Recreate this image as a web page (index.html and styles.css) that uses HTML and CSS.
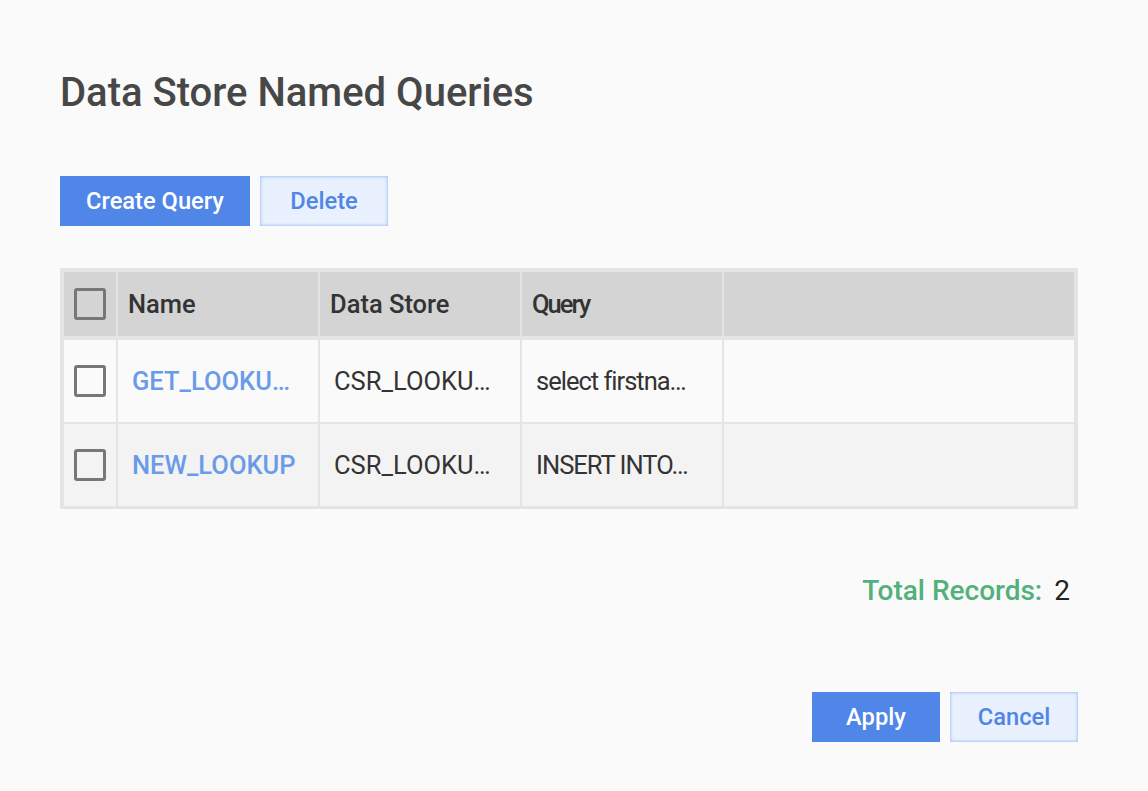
FILE: index.html
```html
<!DOCTYPE html>
<html>
  <head>
    <meta charset="utf-8">
    <title>Data Store Named Queries</title>
    <link rel="stylesheet" href="styles.css">
  </head>
  <body>
    <div class="dialog">
      <h1 class="title">Data Store Named Queries</h1>

      <div class="toolbar">
        <button class="btn primary wide" type="button">Create Query</button>
        <button class="btn secondary" type="button">Delete</button>
      </div>

      <div class="grid">
        <div class="cell head check"><span class="box"></span></div>
        <div class="cell head">Name</div>
        <div class="cell head">Data Store</div>
        <div class="cell head query">Query</div>
        <div class="cell head"></div>

        <div class="cell odd check"><span class="box"></span></div>
        <div class="cell odd body"><a class="link" href="#">GET_LOOKU…</a></div>
        <div class="cell odd body">CSR_LOOKU…</div>
        <div class="cell odd body query">select firstna…</div>
        <div class="cell odd body"></div>

        <div class="cell even check"><span class="box"></span></div>
        <div class="cell even body"><a class="link" href="#">NEW_LOOKUP</a></div>
        <div class="cell even body">CSR_LOOKU…</div>
        <div class="cell even body query">INSERT INTO…</div>
        <div class="cell even body"></div>
      </div>

      <div class="total">
        <span class="total-label">Total Records:</span>
        <span class="total-count">2</span>
      </div>

      <div class="footer">
        <button class="btn primary" type="button">Apply</button>
        <button class="btn secondary" type="button">Cancel</button>
      </div>
    </div>
  </body>
</html>
```

FILE: styles.css
```css
html {
  font-family: Roboto, "Liberation Sans", sans-serif;
}
body {
  margin: 0;
  background-color: #fafafa;
}
.dialog {
  padding: 70px 70px 0 60px;
}
.title {
  margin: 0;
  font-size: 40px;
  font-weight: 500;
  color: #474747;
  line-height: 46px;
}
.toolbar {
  display: flex;
  gap: 10px;
  margin-top: 60px;
}
.btn {
  font-family: Roboto, "Liberation Sans", sans-serif;
  font-size: 23.7px;
  font-weight: 500;
  width: 128px;
  height: 50px;
  border: 0;
  padding: 0;
  cursor: pointer;
}
.btn.wide {
  width: 190px;
}
.primary {
  background-color: #4f86e8;
  color: #ffffff;
}
.secondary {
  background-color: #e9f1fe;
  color: #4f86e8;
  box-shadow: inset 0 0 3px 1px #a9c5f5;
}
.grid {
  display: grid;
  grid-template-columns: 52px 200px 200px 200px 1fr;
  grid-template-rows: 66px 82px 82px;
  gap: 2px;
  margin-top: 42px;
  padding: 4px 4px 3px;
  background-color: #e4e4e4;
}
.cell {
  display: flex;
  align-items: center;
  font-size: 25.5px;
  color: #333333;
  white-space: nowrap;
  overflow: hidden;
}
.head {
  background-color: #d4d4d4;
  font-weight: 500;
  padding-left: 10px;
  margin-bottom: 2px;
}
.odd {
  background-color: #fafafa;
}
.even {
  background-color: #f3f3f3;
}
.body {
  padding-left: 14px;
}
.cell.query {
  letter-spacing: -1px;
}
.head.query {
  letter-spacing: -2px;
}
.check {
  padding-left: 10px;
}
.box {
  display: block;
  width: 26px;
  height: 26px;
  border: 3px solid #777777;
  border-radius: 3px;
}
.link {
  color: #6a9be9;
  font-weight: 500;
  text-decoration: none;
}
.total {
  display: flex;
  justify-content: flex-end;
  gap: 12px;
  margin-top: 65px;
  padding-right: 8px;
  font-size: 28px;
  line-height: 33px;
}
.total-label {
  color: #52b17a;
  font-weight: 500;
}
.total-count {
  color: #222222;
}
.footer {
  display: flex;
  justify-content: flex-end;
  gap: 10px;
  margin-top: 85px;
}
```
